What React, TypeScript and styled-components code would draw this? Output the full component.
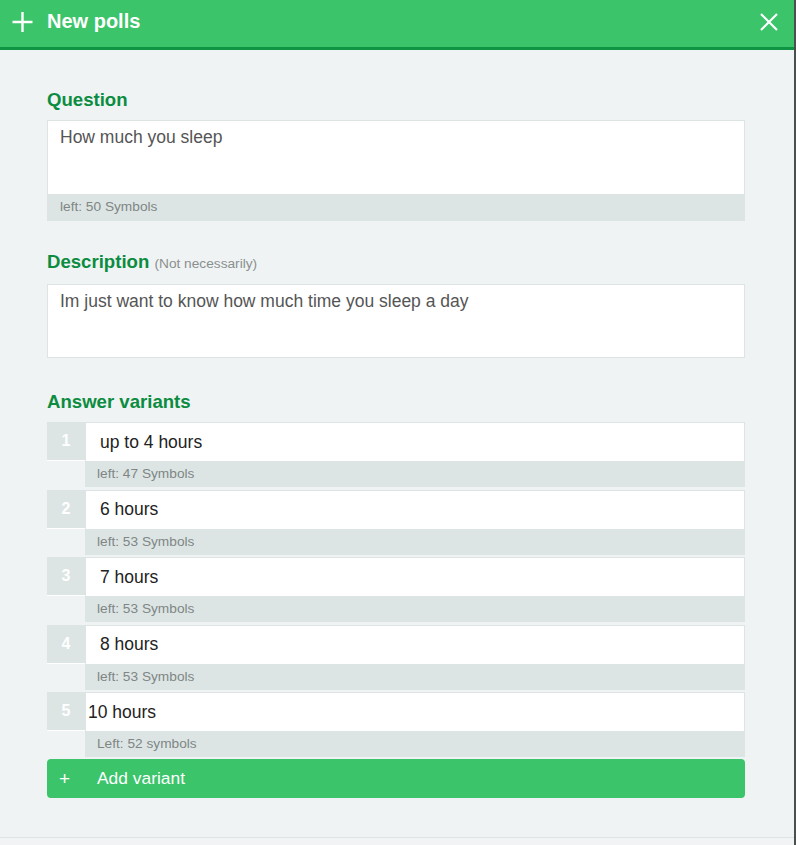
import React from "react";
import styled, { createGlobalStyle } from "styled-components";

const Global = createGlobalStyle`
  html, body { margin: 0; padding: 0; background: #4b4f4d; }
  body { font-family: "Liberation Sans", Arial, sans-serif; }
  * { box-sizing: border-box; }
`;

const Modal = styled.div`
  width: 794px;
  height: 845px;
  background: #eff3f4;
  display: flex;
  flex-direction: column;
  overflow: hidden;
`;

const Header = styled.div`
  height: 50px;
  background: #3bc46a;
  border-bottom: 3px solid #0e9442;
  display: flex;
  align-items: center;
  padding: 0 14px 4px 12px;
  color: #fff;
`;

const Title = styled.div`
  font-size: 20px;
  font-weight: bold;
  margin-left: 13px;
  flex: 1;
`;

const IconBtn = styled.span`
  display: flex;
  width: 22px;
  height: 22px;
`;

const Body = styled.div`
  flex: 1;
  padding: 40px 49px 0 47px;
  display: flex;
  flex-direction: column;
`;

const Label = styled.div<{ $mt?: number }>`
  color: #0b8c40;
  font-weight: bold;
  font-size: 18.6px;
  line-height: 20px;
  margin-top: ${(p) => p.$mt ?? 0}px;
  margin-bottom: 10px;
`;

const Hint = styled.span`
  color: #8a8f8f;
  font-weight: normal;
  font-size: 13.7px;
`;

const Field = styled.div`
  border: 1px solid #dce4e4;
  background: #fff;
`;

const Area = styled.div<{ $h: number }>`
  height: ${(p) => p.$h}px;
  padding: 6px 12px;
  font-size: 17.5px;
  color: #555;
  background: #fff;
`;

const Counter = styled.div<{ $pl?: number }>`
  height: 26px;
  background: #dce5e4;
  color: #808585;
  font-size: 13.7px;
  line-height: 26px;
  padding-left: ${(p) => p.$pl ?? 12}px;
`;

const Variants = styled.div`
  display: flex;
  flex-direction: column;
  gap: 2.5px;
`;

const Row = styled.div`
  display: grid;
  grid-template-columns: 38px 1fr;
`;

const Num = styled.div`
  background: #dce5e4;
  color: #fff;
  font-weight: bold;
  font-size: 16px;
  height: 39px;
  display: flex;
  align-items: center;
  justify-content: center;
  border-bottom: 1px solid #fff;
  margin-bottom: -1px;
`;

const Input = styled.div<{ $pl: number }>`
  height: 39px;
  border: 1px solid #dce4e4;
  border-bottom: none;
  background: #fff;
  font-size: 17.5px;
  color: #222;
  display: flex;
  align-items: center;
  padding-left: ${(p) => p.$pl}px;
`;

const Add = styled.div`
  margin-top: 2px;
  height: 39px;
  background: #3bc46a;
  border-radius: 4px;
  color: #fff;
  font-size: 17.4px;
  display: flex;
  align-items: center;
  padding-left: 12px;
`;

const AddPlus = styled.span`
  width: 38px;
  font-size: 19px;
`;

const Footer = styled.div`
  height: 8px;
  border-top: 1px solid #dde2e3;
  background: #f1f3f4;
`;

const Plus = () => (
  <svg width="22" height="22" viewBox="0 0 22 22">
    <path d="M10.5 1v20M0.5 11h20" stroke="#fff" strokeWidth="2.4" />
  </svg>
);

const Close = () => (
  <svg width="22" height="22" viewBox="0 0 22 22">
    <path d="M3 3l16 16M19 3L3 19" stroke="#fff" strokeWidth="2.2" />
  </svg>
);

const variants = [
  { n: 1, t: "up to 4 hours", c: "left: 47 Symbols", pl: 14 },
  { n: 2, t: "6 hours", c: "left: 53 Symbols", pl: 14 },
  { n: 3, t: "7 hours", c: "left: 53 Symbols", pl: 14 },
  { n: 4, t: "8 hours", c: "left: 53 Symbols", pl: 14 },
  { n: 5, t: "10 hours", c: "Left: 52 symbols", pl: 2 },
];

export default function App() {
  return (
    <>
      <Global />
      <Modal>
        <Header>
          <IconBtn><Plus /></IconBtn>
          <Title>New polls</Title>
          <IconBtn><Close /></IconBtn>
        </Header>
        <Body>
          <Label>Question</Label>
          <Field>
            <Area $h={73}>How much you sleep</Area>
            <Counter>left: 50 Symbols</Counter>
          </Field>
          <Label $mt={31}>
            Description <Hint>(Not necessarily)</Hint>
          </Label>
          <Field>
            <Area $h={72}>Im just want to know how much time you sleep a day</Area>
          </Field>
          <Label $mt={34}>Answer variants</Label>
          <Variants>
            {variants.map((v) => (
              <Row key={v.n}>
                <Num>{v.n}</Num>
                <Input $pl={v.pl}>{v.t}</Input>
                <span />
                <Counter $pl={12}>{v.c}</Counter>
              </Row>
            ))}
          </Variants>
          <Add>
            <AddPlus>+</AddPlus>
            Add variant
          </Add>
        </Body>
        <Footer />
      </Modal>
    </>
  );
}
